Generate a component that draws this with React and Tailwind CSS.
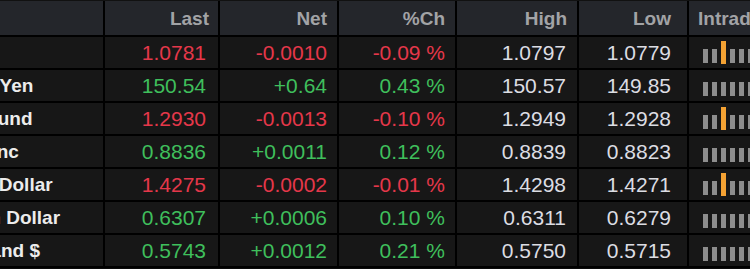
const COLS = 'grid grid-cols-[205px_115px_119px_118px_122px_110px_1fr]'

const ROWS = [
  { name: 'Euro', last: '1.0781', net: '-0.0010', pct: '-0.09 %', high: '1.0797', low: '1.0779', up: false, mark: true },
  { name: 'Japanese Yen', last: '150.54', net: '+0.64', pct: '0.43 %', high: '150.57', low: '149.85', up: true, mark: false },
  { name: 'British Pound', last: '1.2930', net: '-0.0013', pct: '-0.10 %', high: '1.2949', low: '1.2928', up: false, mark: true },
  { name: 'Swiss Franc', last: '0.8836', net: '+0.0011', pct: '0.12 %', high: '0.8839', low: '0.8823', up: true, mark: false },
  { name: 'Canadian Dollar', last: '1.4275', net: '-0.0002', pct: '-0.01 %', high: '1.4298', low: '1.4271', up: false, mark: true },
  { name: 'Australian Dollar', last: '0.6307', net: '+0.0006', pct: '0.10 %', high: '0.6311', low: '0.6279', up: true, mark: false },
  { name: 'New Zealand $', last: '0.5743', net: '+0.0012', pct: '0.21 %', high: '0.5750', low: '0.5715', up: true, mark: false },
]

const Bars = ({ mark }) => (
  <div className="flex items-end gap-[4px] h-[23px] pl-[14px]">
    {[0, 1, 2, 3, 4, 5].map((i) =>
      mark && i === 2 ? (
        <div key={i} className="w-[5px] h-[23px] bg-[#f4a233]"></div>
      ) : (
        <div key={i} className="w-[5px] h-[14px] mb-[1px] bg-[#8d8d8d]"></div>
      )
    )}
  </div>
)

export default function App() {
  return (
    <div className="w-[750px] h-[269px] overflow-hidden bg-[#0b0b0b] font-['Liberation_Sans',Arial,sans-serif]">
      <div className="w-[880px] -ml-[100px]">
        {/* Header */}
        <div className={`${COLS} h-[37px] bg-[#24262b] border-t border-[#111] border-b-2 border-b-black text-[19px] font-bold text-[#a2a3a6]`}>
          <div className="border-r-2 border-black"></div>
          <div className="flex items-center justify-end pr-[9px] pt-[3px] border-r-2 border-black">Last</div>
          <div className="flex items-center justify-end pr-[10px] pt-[3px] border-r-2 border-black">Net</div>
          <div className="flex items-center justify-end pr-[10px] pt-[3px] border-r-2 border-black">%Ch</div>
          <div className="flex items-center justify-end pr-[10px] pt-[3px] border-r-2 border-black">High</div>
          <div className="flex items-center justify-end pr-[16px] pt-[3px] border-r-2 border-black">Low</div>
          <div className="flex items-center pl-[9px] pt-[3px] whitespace-nowrap">Intraday</div>
        </div>

        {ROWS.map((r) => {
          const tone = r.up ? 'text-[#3fbf5c]' : 'text-[#e5374a]'
          return (
            <div key={r.name} className={`${COLS} h-[33px] bg-[#171717] border-b-2 border-black text-[21px] leading-none`}>
              <div className="flex items-center pl-[8px] border-r-2 border-black text-[19px] font-bold text-[#ececec] whitespace-nowrap">
                {r.name}
              </div>
              <div className={`flex items-center justify-end pr-[12px] border-r-2 border-black ${tone}`}>{r.last}</div>
              <div className={`flex items-center justify-end pr-[10px] border-r-2 border-black ${tone}`}>{r.net}</div>
              <div className={`flex items-center justify-end pr-[10px] border-r-2 border-black whitespace-pre ${tone}`}>{r.pct}</div>
              <div className="flex items-center justify-end pr-[11px] border-r-2 border-black text-[#dcdde3]">{r.high}</div>
              <div className="flex items-center justify-end pr-[16px] border-r-2 border-black text-[#dcdde3]">{r.low}</div>
              <div className="flex items-center">
                <Bars mark={r.mark} />
              </div>
            </div>
          )
        })}
      </div>
    </div>
  )
}
